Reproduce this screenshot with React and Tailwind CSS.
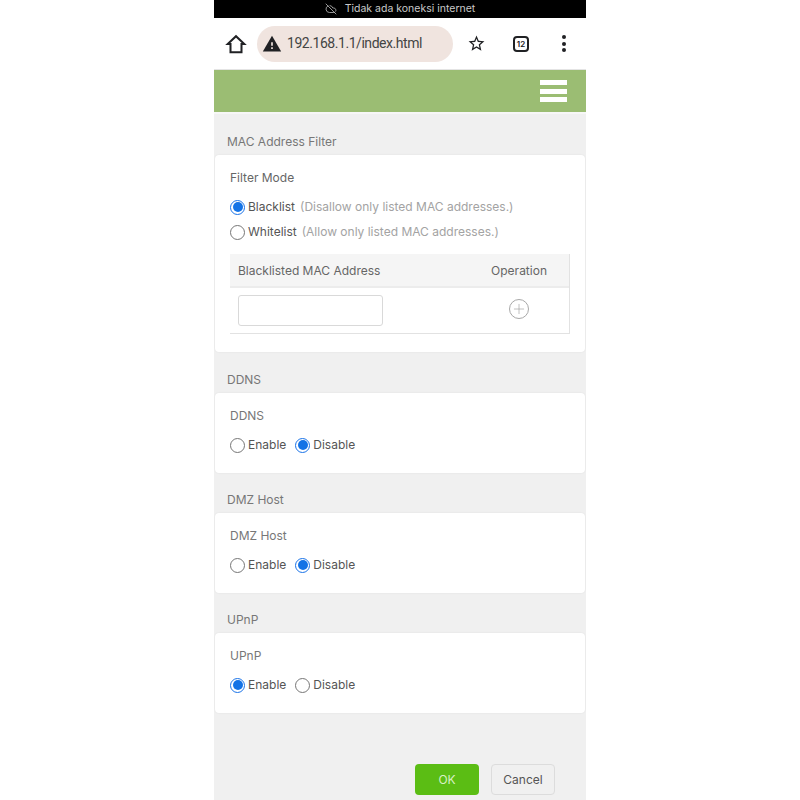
import React from 'react';
import { CloudOff, Plus } from 'lucide-react';

const Radio = ({ checked }) => (
  <span
    className={`flex h-[15px] w-[15px] shrink-0 items-center justify-center rounded-full border bg-white ${
      checked ? 'border-[#1a73e8]' : 'border-[#767676]'
    }`}
  >
    {checked && <span className="h-[10px] w-[10px] rounded-full bg-[#1473e6]" />}
  </span>
);

const RadioLabel = ({ checked, label, hint }) => (
  <div className="flex h-[16px] items-center gap-[3px]">
    <Radio checked={checked} />
    <span className="text-[#555]">{label}</span>
    {hint && <span className="ml-[2px] text-[#a3a3a3]">{hint}</span>}
  </div>
);

const Section = ({ title, children, height }) => (
  <section>
    <h2 className="flex h-[41px] items-end px-[13px] pb-[4px] text-[12px] font-normal text-[#777]">{title}</h2>
    <div className={`mx-px rounded-[4px] bg-white px-[15px] shadow-[0_0_2px_rgba(0,0,0,0.08)] ${height}`}>
      {children}
    </div>
  </section>
);

const ToggleSection = ({ title, enabled }) => (
  <Section title={title} height="h-[80px] pt-[15px]">
    <p className="h-[16px] leading-[16px] text-[#777]">{title}</p>
    <div className="mt-[13px] flex gap-[9px]">
      <RadioLabel checked={enabled} label="Enable" />
      <RadioLabel checked={!enabled} label="Disable" />
    </div>
  </Section>
);

export default function App() {
  return (
    <div className="flex h-[800px] w-full justify-center bg-white font-['Inter','Roboto',sans-serif] text-[12px]">
      <div className="flex w-[372px] flex-col overflow-hidden bg-[#f0f0f0]">
        <div className="flex h-[18px] items-center justify-center gap-[8px] bg-black text-[10.5px] text-[#c9c9c9]">
          <CloudOff size={12} strokeWidth={1.5} />
          <span>Tidak ada koneksi internet</span>
        </div>

        <div className="flex h-[51px] items-center bg-white">
          <svg viewBox="0 0 24 24" className="ml-[11px] h-[22px] w-[22px]" fill="none" stroke="#202124" strokeWidth="2.2" strokeLinejoin="miter">
            <path d="M3 12 12 3.5 21 12H18V21H6V12Z" />
          </svg>
          <div className="ml-[10px] flex h-[36px] w-[196px] items-center rounded-full bg-[#f0e4df] pl-[5px]">
            <svg viewBox="0 0 24 24" className="h-[20px] w-[20px]">
              <path d="M1 21h22L12 2 1 21z" fill="#202124" />
              <path d="M13 18h-2v-2h2v2zm0-4h-2v-4h2v4z" fill="#f0e4df" />
            </svg>
            <span className="ml-[5px] font-['Roboto',sans-serif] text-[14px] tracking-[-0.45px] text-[#444]">192.168.1.1/index.html</span>
          </div>
          <svg viewBox="0 0 24 24" className="ml-[14px] h-[19px] w-[19px]" fill="#202124">
            <path d="M22 9.24l-7.19-.62L12 2 9.19 8.63 2 9.24l5.46 4.73L5.82 21 12 17.27 18.18 21l-1.63-7.03L22 9.24zM12 15.4l-3.76 2.27 1-4.28-3.32-2.88 4.38-.38L12 6.1l1.71 4.04 4.38.38-3.32 2.88 1 4.28L12 15.4z" />
          </svg>
          <span className="ml-[27px] flex h-[16px] w-[16px] items-center justify-center rounded-[4px] border-2 border-[#202124] text-[8px] font-semibold text-[#202124]">
            12
          </span>
          <div className="ml-[33px] flex flex-col gap-[2.5px]">
            <span className="h-[4px] w-[4px] rounded-full bg-[#202124]" />
            <span className="h-[4px] w-[4px] rounded-full bg-[#202124]" />
            <span className="h-[4px] w-[4px] rounded-full bg-[#202124]" />
          </div>
        </div>

        <div className="flex h-[43px] flex-col items-end justify-center gap-[3.5px] border-t border-[#e4e4e4] bg-[#9bbd73] pr-[19px]">
          <span className="h-[5px] w-[27px] bg-white" />
          <span className="h-[5px] w-[27px] bg-white" />
          <span className="h-[5px] w-[27px] bg-white" />
        </div>
        <div className="h-[2px] bg-[#f7f7f7]" />

        <Section title="MAC Address Filter" height="h-[197px] pt-[15px]">
          <p className="h-[16px] leading-[16px] text-[#666]">Filter Mode</p>
          <div className="mt-[13px] flex flex-col gap-[9px]">
            <RadioLabel checked label="Blacklist" hint="(Disallow only listed MAC addresses.)" />
            <RadioLabel label="Whitelist" hint="(Allow only listed MAC addresses.)" />
          </div>
          <div className="mt-[14px] border-b border-r border-[#e2e2e2]">
            <div className="flex h-[34px] items-center justify-between border-b-2 border-[#ececec] bg-[#f5f5f5] pl-[8px] pr-[22px] pt-[2px] text-[#666]">
              <span>Blacklisted MAC Address</span>
              <span>Operation</span>
            </div>
            <div className="flex h-[45px] items-center justify-between pl-[8px] pr-[40px]">
              <input
                type="text"
                className="h-[31px] w-[145px] rounded-[3px] border border-[#d9d9d9] bg-white outline-none"
              />
              <span className="-mt-[3px] flex h-[20px] w-[20px] items-center justify-center rounded-full border border-[#a8a8a8] text-[#a0a0a0]">
                <Plus size={16} strokeWidth={1} />
              </span>
            </div>
          </div>
        </Section>

        <ToggleSection title="DDNS" enabled={false} />
        <div className="-mt-px">
          <ToggleSection title="DMZ Host" enabled={false} />
        </div>
        <div className="-mt-px">
          <ToggleSection title="UPnP" enabled />
        </div>

        <div className="mt-[51px] flex justify-end gap-[12px] pr-[31px]">
          <button className="h-[31px] w-[64px] rounded-[4px] bg-[#5bbd14] text-[#d8f0c4]">OK</button>
          <button className="h-[31px] w-[64px] rounded-[4px] border border-[#dcdcdc] bg-[#f0f0f0] text-[#555]">Cancel</button>
        </div>
      </div>
    </div>
  );
}
